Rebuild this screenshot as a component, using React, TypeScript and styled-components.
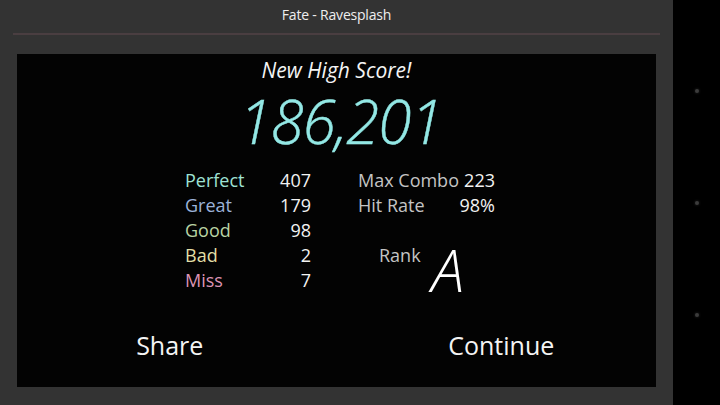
import React from 'react';
import styled, { createGlobalStyle } from 'styled-components';

const GlobalStyle = createGlobalStyle`
  html, body {
    margin: 0;
    padding: 0;
    background: #000;
  }
  body {
    font-family: "Open Sans", "Noto Sans", sans-serif;
    color: #fff;
  }
`;

const Screen = styled.div`
  display: flex;
  width: 720px;
  height: 405px;
  overflow: hidden;
`;

const Main = styled.div`
  width: 673px;
  background: #333333;
  display: flex;
  flex-direction: column;
`;

const Title = styled.div`
  height: 30px;
  line-height: 30px;
  text-align: center;
  font-size: 14px;
  letter-spacing: -0.2px;
  color: #eeeeee;
`;

const Divider = styled.div`
  height: 2px;
  margin: 3px 13px 0 13px;
  background: #4a3e41;
`;

const Panel = styled.div`
  margin: 19px 17px 0 17px;
  height: 333px;
  background: #030303;
  display: flex;
  flex-direction: column;
  align-items: center;
  padding-top: 4px;
  box-sizing: border-box;
`;

const HighScore = styled.div`
  font-size: 21px;
  line-height: 24px;
  font-style: italic;
  color: #f4f4f4;
`;

const Score = styled.div`
  margin-top: 11px;
  padding-left: 8px;
  font-size: 60px;
  line-height: 56px;
  font-style: italic;
  font-weight: 300;
  color: #93e8e5;
  letter-spacing: -1px;
  -webkit-text-stroke: 0.4px #93e8e5;
`;

const Stats = styled.div`
  margin-top: 19px;
  display: flex;
  gap: 47px;
  padding-left: 7px;
  font-size: 18px;
  line-height: 25px;
`;

const JudgeTable = styled.div`
  width: 126px;
  display: grid;
  grid-template-columns: 1fr auto;
  grid-auto-rows: 25px;
`;

const JudgeLabel = styled.span<{ $color: string }>`
  color: ${p => p.$color};
`;

const Value = styled.span`
  text-align: right;
  color: #f2f2f2;
`;

const Summary = styled.div`
  width: 137px;
  display: flex;
  flex-direction: column;
`;

const SummaryRow = styled.div`
  height: 25px;
  display: flex;
  justify-content: space-between;
`;

const SummaryLabel = styled.span`
  color: #c4c4c4;
`;

const RankRow = styled.div`
  margin-top: 25px;
  padding-left: 21px;
  height: 25px;
  display: flex;
  align-items: flex-start;
  gap: 11px;
`;

const RankLetter = styled.span`
  margin-top: -3px;
  font-size: 59px;
  line-height: 59px;
  font-style: italic;
  font-weight: 300;
  color: #ffffff;
`;

const Actions = styled.div`
  margin-top: 37px;
  width: 100%;
  display: grid;
  grid-template-columns: 1fr 1fr;
`;

const ActionButton = styled.button<{ $shift: number }>`
  background: none;
  border: none;
  padding: 0;
  font-family: inherit;
  font-size: 25px;
  line-height: 30px;
  color: #f4f4f4;
  text-align: center;
  transform: translateX(${p => p.$shift}px);
  cursor: pointer;
`;

const Side = styled.div`
  flex: 1;
  background: #000;
  display: flex;
  flex-direction: column;
  align-items: center;
  justify-content: center;
  gap: 108px;
`;

const Dot = styled.div`
  width: 4px;
  height: 4px;
  border-radius: 50%;
  background: #3c3c3c;
  box-shadow: 0 0 3px #2a2a2a;
`;

const judges = [
  { label: 'Perfect', value: 407, color: '#9fe2d4' },
  { label: 'Great', value: 179, color: '#9cb3da' },
  { label: 'Good', value: 98, color: '#b8d3a3' },
  { label: 'Bad', value: 2, color: '#e3dfa6' },
  { label: 'Miss', value: 7, color: '#dc94b4' },
];

export default function App() {
  return (
    <>
      <GlobalStyle />
      <Screen>
        <Main>
          <Title>Fate - Ravesplash</Title>
          <Divider />
          <Panel>
            <HighScore>New High Score!</HighScore>
            <Score>186,201</Score>
            <Stats>
              <JudgeTable>
                {judges.map(j => (
                  <React.Fragment key={j.label}>
                    <JudgeLabel $color={j.color}>{j.label}</JudgeLabel>
                    <Value>{j.value}</Value>
                  </React.Fragment>
                ))}
              </JudgeTable>
              <Summary>
                <SummaryRow>
                  <SummaryLabel>Max Combo</SummaryLabel>
                  <Value>223</Value>
                </SummaryRow>
                <SummaryRow>
                  <SummaryLabel>Hit Rate</SummaryLabel>
                  <Value>98%</Value>
                </SummaryRow>
                <RankRow>
                  <SummaryLabel>Rank</SummaryLabel>
                  <RankLetter>A</RankLetter>
                </RankRow>
              </Summary>
            </Stats>
            <Actions>
              <ActionButton $shift={-7}>Share</ActionButton>
              <ActionButton $shift={5}>Continue</ActionButton>
            </Actions>
          </Panel>
        </Main>
        <Side>
          <Dot />
          <Dot />
          <Dot />
        </Side>
      </Screen>
    </>
  );
}
